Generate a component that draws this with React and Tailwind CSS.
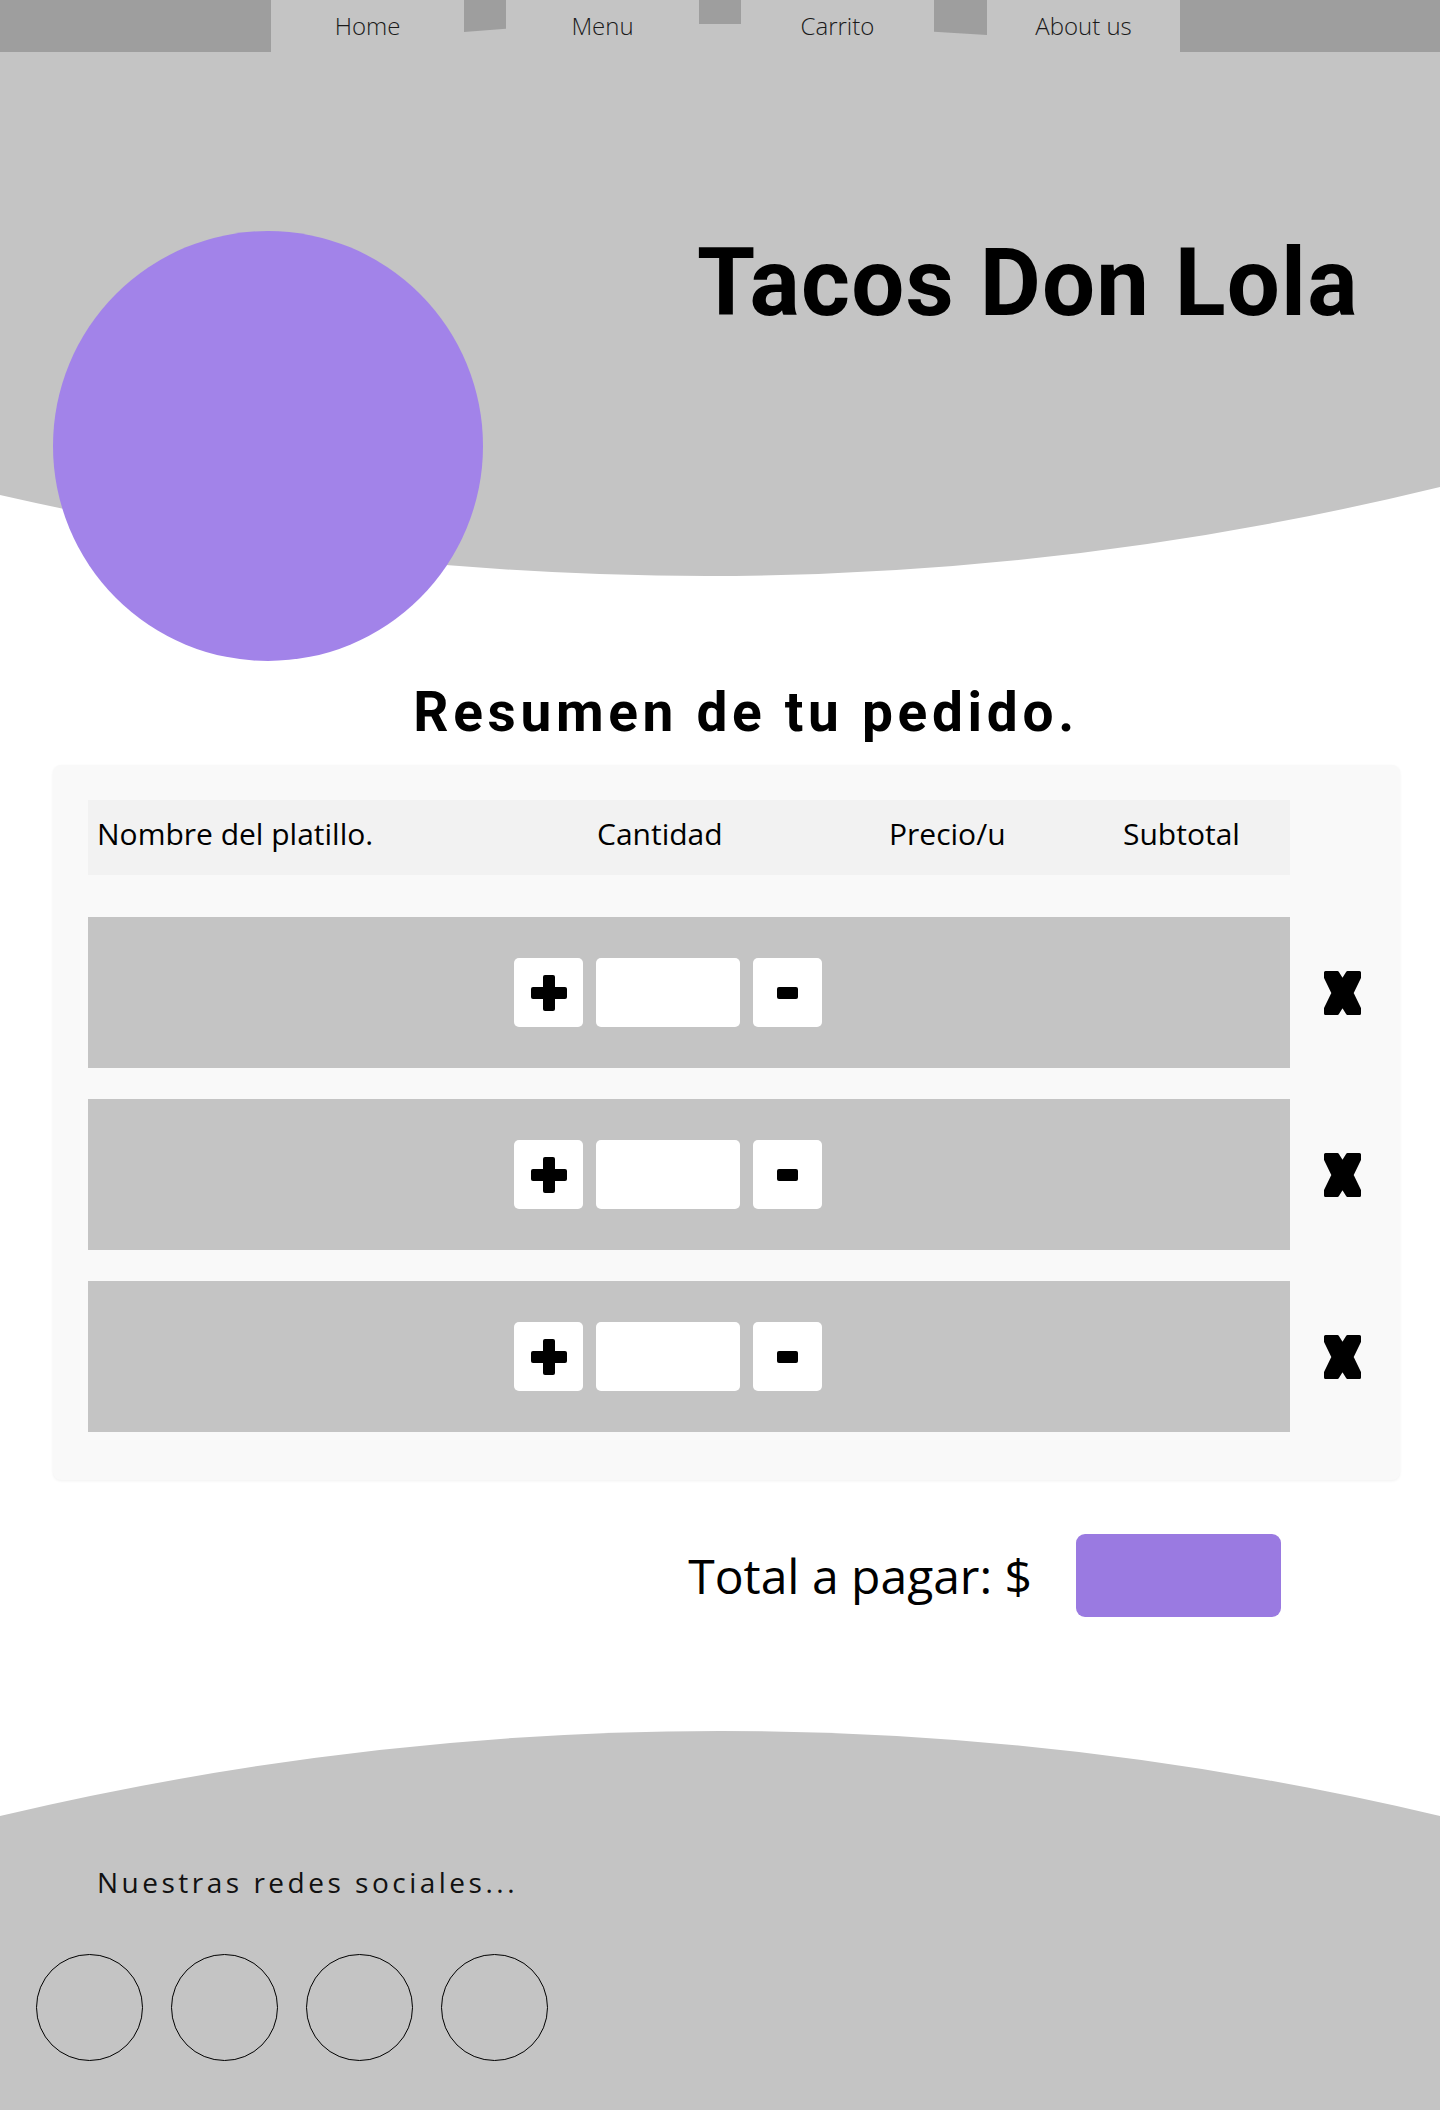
import React from "react";

function XIcon() {
  return (
    <svg width="37" height="44" viewBox="0 0 37 44" className="shrink-0">
      <path
        d="M1.5 1.5 H13.5 L18.5 9.5 L23.5 1.5 H35.5 V6.5 L28 22 L35.5 37.5 V42.5 H23.5 L18.5 34.5 L13.5 42.5 H1.5 V37.5 L9 22 L1.5 6.5 Z"
        fill="#000"
        stroke="#000"
        strokeWidth="3"
        strokeLinejoin="round"
      />
    </svg>
  );
}

function Row() {
  return (
    <div className="flex items-center">
      <div className="flex h-[151px] w-[1202px] items-center gap-[13px] bg-[#c4c4c4] pl-[426px]">
        <button className="flex h-[69px] w-[69px] items-center justify-center rounded-[5px] bg-white">
          <span className="relative block h-[36px] w-[36px]">
            <span className="absolute left-[12px] top-0 h-[36px] w-[12px] rounded-[2px] bg-black" />
            <span className="absolute left-0 top-[12px] h-[12px] w-[36px] rounded-[2px] bg-black" />
          </span>
        </button>
        <div className="h-[69px] w-[144px] rounded-[5px] bg-white" />
        <button className="flex h-[69px] w-[69px] items-center justify-center rounded-[5px] bg-white">
          <span className="block h-[12px] w-[21px] rounded-[2px] bg-black" />
        </button>
      </div>
      <div className="ml-[34px]">
        <XIcon />
      </div>
    </div>
  );
}

export default function App() {
  const navItem =
    "flex h-[52px] w-[193px] items-center justify-center text-[24px] font-light text-[#1a1a1a]";
  return (
    <div
      className="relative w-[1440px] min-h-[2110px] bg-white text-black"
      style={{ fontFamily: "'Open Sans', 'Noto Sans', sans-serif" }}
    >
      {/* Header */}
      <header className="relative h-[661px]">
        <svg
          className="absolute left-0 top-0"
          width="1440"
          height="661"
          viewBox="0 0 1440 661"
        >
          <path d="M0 0 H1440 V487 Q727 661 0 495 Z" fill="#c4c4c4" />
        </svg>
        <nav className="relative flex h-[52px]">
          <div className="h-[52px] w-[271px] bg-[#9e9e9e]" />
          <div className="flex">
            <a className={navItem}>Home</a>
            <div className="h-[32px] w-[42px] bg-[#9e9e9e] [clip-path:polygon(0_0,100%_0,100%_90%,0_100%)]" />
            <a className={navItem}>Menu</a>
            <div className="h-[24px] w-[42px] bg-[#9e9e9e]" />
            <a className={navItem}>Carrito</a>
            <div className="h-[35px] w-[53px] bg-[#9e9e9e] [clip-path:polygon(0_0,100%_0,100%_100%,0_91%)]" />
            <a className={navItem}>About us</a>
          </div>
          <div className="h-[52px] flex-1 bg-[#9e9e9e]" />
        </nav>
        <div className="relative flex">
          <div className="ml-[53px] mt-[179px] h-[430px] w-[430px] rounded-full bg-[#a283e9]" />
          <h1
            className="ml-[214px] mt-[184px] text-[94px] font-bold leading-none tracking-[0.013em]"
            style={{ fontFamily: "Roboto, 'Noto Sans', sans-serif" }}
          >
            Tacos Don Lola
          </h1>
        </div>
      </header>

      {/* Order summary */}
      <main>
        <h2
          className="mt-[24px] pl-[52px] text-center text-[55px] font-bold leading-none tracking-[0.085em]"
          style={{ fontFamily: "Roboto, 'Noto Sans', sans-serif" }}
        >
          Resumen de tu pedido.
        </h2>

        <section className="ml-[53px] mt-[25px] w-[1347px] rounded-[8px] bg-[#f9f9f9] pb-[48px] pl-[35px] pt-[35px] shadow-[0_1px_3px_rgba(0,0,0,0.06)]">
          <div className="flex h-[75px] w-[1202px] items-center bg-[#f2f2f2] pb-[7px] pl-[9px] text-[30px] leading-none">
            <span className="w-[500px]">Nombre del platillo.</span>
            <span className="w-[292px]">Cantidad</span>
            <span className="w-[234px]">Precio/u</span>
            <span>Subtotal</span>
          </div>
          <div className="mt-[42px] flex flex-col gap-[31px]">
            <Row />
            <Row />
            <Row />
          </div>
        </section>

        <div className="mt-[54px] flex items-center justify-end gap-[44px] pr-[159px]">
          <span className="text-[48px] leading-none">Total a pagar: $</span>
          <button className="h-[83px] w-[205px] rounded-[9px] bg-[#9a7ae1]" />
        </div>
      </main>

      {/* Footer */}
      <footer className="relative mt-[114px] h-[380px]">
        <svg
          className="absolute left-0 top-0"
          width="1440"
          height="380"
          viewBox="0 0 1440 380"
        >
          <path d="M0 85 Q720 -85 1440 85 V380 H0 Z" fill="#c4c4c4" />
        </svg>
        <div className="relative pt-[137px]">
          <p className="pl-[97px] text-[28px] leading-none tracking-[0.125em] text-[#111]">
            Nuestras redes sociales...
          </p>
          <div className="mt-[58px] flex gap-[28px] pl-[36px]">
            <a className="h-[107px] w-[107px] rounded-full border border-black" />
            <a className="h-[107px] w-[107px] rounded-full border border-black" />
            <a className="h-[107px] w-[107px] rounded-full border border-black" />
            <a className="h-[107px] w-[107px] rounded-full border border-black" />
          </div>
        </div>
      </footer>
    </div>
  );
}
